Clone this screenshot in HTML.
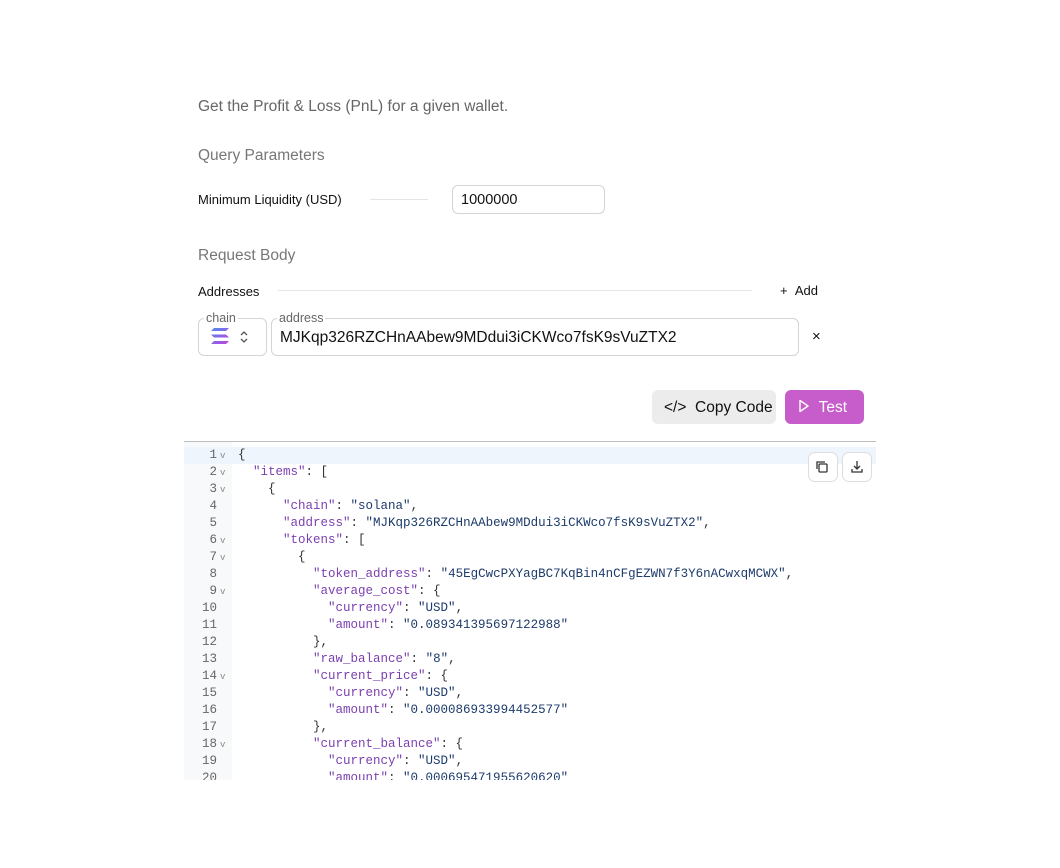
<!DOCTYPE html>
<html><head><style>
*{margin:0;padding:0;box-sizing:border-box}
body{width:1060px;height:868px;background:#fff;font-family:"Liberation Sans",sans-serif;position:relative;overflow:hidden;color:#111}
.a{position:absolute}
.code{position:absolute;left:184px;top:441px;width:692px;height:339px;overflow:hidden;border-top:1.5px solid #bdbdbd;font-family:"Liberation Mono",monospace;font-size:12.5px}
.gut{position:absolute;left:0;top:0;width:48px;height:100%;background:#f8f9fa}
.ln{position:absolute;left:0;width:692px;height:17px;line-height:17px;white-space:pre}
.n{display:inline-block;width:33px;text-align:right;color:#666}
.f{display:inline-block;width:21px;color:#888;font-size:9px;padding-left:3px}
.k{color:#7b3fb0}.s{color:#1d3b6b}.p{color:#333}
.btn{position:absolute;width:30px;height:30px;border:1px solid #ddd;border-radius:7px;background:#fff}
</style></head><body>
<div class="a" style="left:198px;top:98px;font-size:15.5px;color:#666">Get the Profit &amp; Loss (PnL) for a given wallet.</div>
<div class="a" style="left:198px;top:147px;font-size:15.5px;color:#777">Query Parameters</div>
<div class="a" style="left:198px;top:192px;font-size:13px;color:#111">Minimum Liquidity (USD)</div>
<div class="a" style="left:370px;top:199px;width:58px;height:1px;background:#e5e5e5"></div>
<div class="a" style="left:452px;top:185px;width:153px;height:29px;border:1px solid #d4d4d4;border-radius:6px;font-size:14.5px;padding:6px 8px">1000000</div>
<div class="a" style="left:198px;top:247px;font-size:15.5px;color:#777">Request Body</div>
<div class="a" style="left:198px;top:284px;font-size:13px">Addresses</div>
<div class="a" style="left:278px;top:290px;width:474px;height:1px;background:#e5e5e5"></div>
<div class="a" style="left:780px;top:283px;font-size:13px">+&nbsp;&nbsp;Add</div>
<div class="a" style="left:198px;top:318px;width:69px;height:38px;border:1px solid #d4d4d4;border-radius:6px"></div>
<div class="a" style="left:204px;top:311px;font-size:12.5px;color:#666;background:#fff;padding:0 2px">chain</div>
<svg class="a" style="left:211px;top:328px" width="18" height="16" viewBox="0 0 18 16"><defs><linearGradient id="g" x1="0" y1="0" x2="1" y2="1"><stop offset="0" stop-color="#4f8cf0"/><stop offset="1" stop-color="#c040e0"/></linearGradient></defs><path d="M3 0h15l-3 3H0zM0 6.5h15l3 3H3zM3 13h15l-3 3H0z" fill="url(#g)"/></svg>
<svg class="a" style="left:239px;top:330px" width="10" height="14" viewBox="0 0 10 14"><path d="M2 5l3-3 3 3M2 9l3 3 3-3" fill="none" stroke="#555" stroke-width="1.3"/></svg>
<div class="a" style="left:271px;top:318px;width:528px;height:38px;border:1px solid #d4d4d4;border-radius:6px;font-size:15.5px;padding:10px 8px">MJKqp326RZCHnAAbew9MDdui3iCKWco7fsK9sVuZTX2</div>
<div class="a" style="left:277px;top:311px;font-size:12.5px;color:#666;background:#fff;padding:0 2px">address</div>
<div class="a" style="left:812px;top:328px;font-size:15px">×</div>
<div class="a" style="left:652px;top:390px;width:124px;height:34px;background:#ececec;border-radius:6px;font-size:15.5px;padding:9px 0 0 12px">&lt;/&gt;&nbsp;&nbsp;Copy Code</div>
<div class="a" style="left:785px;top:390px;width:79px;height:34px;background:#c75ccb;border-radius:6px;color:#fff;font-size:15.5px;padding:9px 0 0 13px"><svg width="12" height="14" viewBox="0 0 12 14" style="vertical-align:-1px"><path d="M2 1.5l8 5.5-8 5.5z" fill="none" stroke="#fff" stroke-width="1.4" stroke-linejoin="round"/></svg>&nbsp;&nbsp;Test</div>
<div class="code"><div class="gut"></div>
<div class="a" style="left:0;top:5px;width:692px;height:17px;background:#eef5fd"></div>
<div id="c"></div>
<div class="btn" style="left:624px;top:10px"><svg width="28" height="28" viewBox="0 0 28 28"><rect x="10" y="11" width="8" height="8" rx="1" fill="none" stroke="#333" stroke-width="1.3"/><path d="M8 16V9h8" fill="none" stroke="#333" stroke-width="1.3"/></svg></div>
<div class="btn" style="left:658px;top:10px"><svg width="28" height="28" viewBox="0 0 28 28"><path d="M14 8v8M11 13l3 3 3-3M9 16v3h10v-3" fill="none" stroke="#333" stroke-width="1.3"/></svg></div>
</div>
<script>
var L=[[0,'{',1],[1,'<k>"items"</k>: [',1],[2,'{',1],[3,'<k>"chain"</k>: <s>"solana"</s>,'],[3,'<k>"address"</k>: <s>"MJKqp326RZCHnAAbew9MDdui3iCKWco7fsK9sVuZTX2"</s>,'],[3,'<k>"tokens"</k>: [',1],[4,'{',1],[5,'<k>"token_address"</k>: <s>"45EgCwcPXYagBC7KqBin4nCFgEZWN7f3Y6nACwxqMCWX"</s>,'],[5,'<k>"average_cost"</k>: {',1],[6,'<k>"currency"</k>: <s>"USD"</s>,'],[6,'<k>"amount"</k>: <s>"0.089341395697122988"</s>'],[5,'},'],[5,'<k>"raw_balance"</k>: <s>"8"</s>,'],[5,'<k>"current_price"</k>: {',1],[6,'<k>"currency"</k>: <s>"USD"</s>,'],[6,'<k>"amount"</k>: <s>"0.000086933994452577"</s>'],[5,'},'],[5,'<k>"current_balance"</k>: {',1],[6,'<k>"currency"</k>: <s>"USD"</s>,'],[6,'<k>"amount"</k>: <s>"0.000695471955620620"</s>']];
var h='';L.forEach(function(l,i){var t=l[1].replace(/<k>/g,'<span class="k">').replace(/<\/k>/g,'</span>').replace(/<s>/g,'<span class="s">').replace(/<\/s>/g,'</span>');h+='<div class="ln" style="top:'+(5+17*i)+'px"><span class="n">'+(i+1)+'</span><span class="f">'+(l[2]?'v':'')+'</span><span class="p">'+'  '.repeat(l[0])+t+'</span></div>';});
document.getElementById('c').innerHTML=h;
</script>
</body></html>
